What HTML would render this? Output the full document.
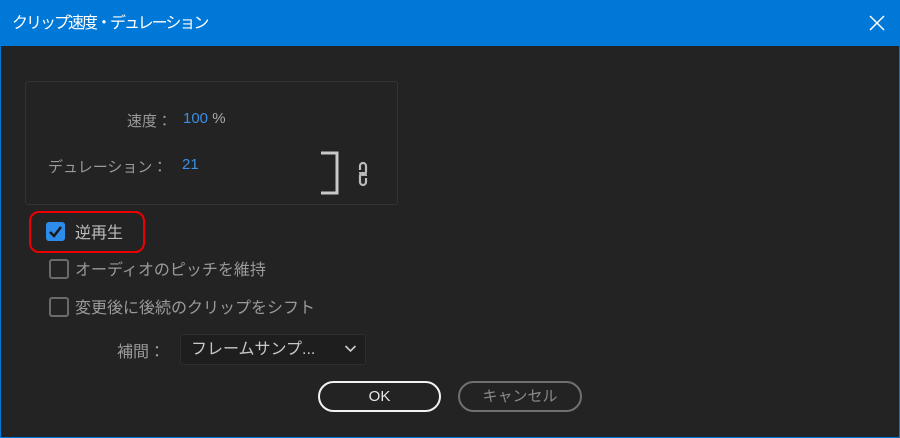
<!DOCTYPE html>
<html><head><meta charset="utf-8"><style>
*{margin:0;padding:0;box-sizing:border-box}
body{width:900px;height:438px;background:#0078d7;font-family:"Liberation Sans","Noto Sans CJK JP",sans-serif;position:relative;overflow:hidden}
.title{position:absolute;left:0;top:0;width:900px;height:46px;background:#0078d7;color:#fff;font-size:16px;letter-spacing:-2px;line-height:48px;padding-left:12px}
.x{position:absolute;right:14px;top:14px}
.main{position:absolute;left:1px;top:46px;width:898px;height:391px;background:#232323}
.a{position:absolute;white-space:nowrap}
.g{color:#9a9a9a;font-size:15px}
.b{color:#3a8ee6;font-size:15px}
.n{font-size:16px}
.panel{position:absolute;left:25px;top:81px;width:373px;height:124px;border:1px solid #333;border-radius:3px}
.cb{position:absolute;left:49px;width:20px;height:20px;border:2px solid #6a6a6a;border-radius:3px}
.btn{position:absolute;top:381px;height:31px;border-radius:16px;font-size:15px;text-align:center;line-height:27px}
</style></head><body>
<div class="title">クリップ速度・デュレーション</div>
<svg class="x" width="18" height="18" viewBox="0 0 18 18"><path d="M2 2L16 16M16 2L2 16" stroke="#fff" stroke-width="1.5"/></svg>
<div class="main"></div>
<div class="panel"></div>
<div class="a g" style="left:127px;top:110px">速度：</div>
<div class="a b" style="left:183px;top:110px">100 <span style="color:#aaa">%</span></div>
<div class="a g" style="left:48px;top:156px">デュレーション：</div>
<div class="a b" style="left:182px;top:156px">21</div>
<svg class="a" style="left:318px;top:150px" width="22" height="46"><path d="M3 3H19V43H3" stroke="#c8c8c8" stroke-width="3" fill="none"/></svg>
<svg class="a" style="left:354px;top:160px" width="18" height="28" viewBox="0 0 18 28"><path d="M6 10V6a3 3 0 0 1 6 0v6a3 3 0 0 1-6 0M12 18v4a3 3 0 0 1-6 0v-6a3 3 0 0 1 6 0" stroke="#bbb" stroke-width="2.2" fill="none"/></svg>
<div class="a" style="left:29px;top:211px;width:116px;height:42px;border:2px solid #e00;border-radius:10px"></div>
<div class="a" style="left:46px;top:222px;width:19px;height:19px;background:#2d8ceb;border-radius:3px"></div>
<svg class="a" style="left:46px;top:222px" width="19" height="19"><path d="M4 10l4 4 7-9" stroke="#1a1a1a" stroke-width="2.5" fill="none"/></svg>
<div class="a g" style="left:75px;top:219px;color:#bdbdbd;font-size:16px">逆再生</div>
<div class="cb" style="top:259px;left:49px"></div>
<div class="a g n" style="left:75px;top:256px">オーディオのピッチを維持</div>
<div class="cb" style="top:297px;left:49px"></div>
<div class="a g n" style="left:75px;top:294px">変更後に後続のクリップをシフト</div>
<div class="a g" style="left:117px;top:338px;font-size:16px">補間：</div>
<div class="a" style="left:180px;top:334px;width:186px;height:31px;background:#1e1e1e;border:1px solid #2e2e2e;border-radius:3px;color:#c8c8c8;font-size:16px;line-height:29px;padding-left:10px">フレームサンプ...</div>
<svg class="a" style="left:344px;top:344px" width="13" height="9"><path d="M1.5 2l5 5 5-5" stroke="#ccc" stroke-width="1.6" fill="none"/></svg>
<div class="btn" style="left:318px;width:123px;border:2px solid #f2f2f2;color:#e8e8e8">OK</div>
<div class="btn" style="left:458px;width:124px;border:2px solid #707070;color:#8a8a8a">キャンセル</div>
</body></html>
